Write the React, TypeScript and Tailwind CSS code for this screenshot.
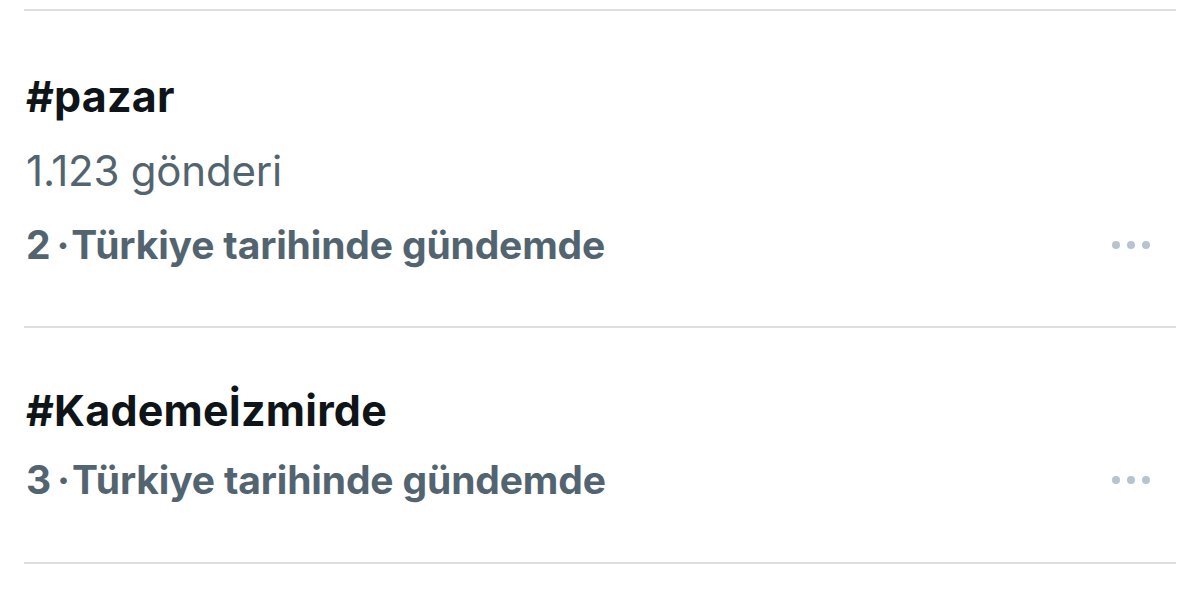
interface Trend {
  tag: string;
  posts?: string;
  rank: number;
}

const trends: Trend[] = [
  { tag: '#pazar', posts: '1.123 gönderi', rank: 2 },
  { tag: '#Kademeİzmirde', rank: 3 },
];

function MoreDots() {
  return (
    <div className="flex items-center gap-[7px] pr-[26px]">
      <span className="w-[8px] h-[8px] rounded-full bg-[#b7c4cf]" />
      <span className="w-[8px] h-[8px] rounded-full bg-[#b7c4cf]" />
      <span className="w-[8px] h-[8px] rounded-full bg-[#b7c4cf]" />
    </div>
  );
}

function TrendItem({ trend }: { trend: Trend }) {
  // first item has the post count row, so spacing differs a bit
  const withPosts = !!trend.posts;
  return (
    <div className={`border-b-2 border-[#dcdfe2] pl-[2px] ${withPosts ? 'pt-[48px] pb-[44px]' : 'pt-[47px] pb-[47px]'}`}>
      <div
        className={`${withPosts ? 'h-[74px]' : 'h-[70px]'} flex items-center text-[43px] font-bold text-[#0f1419] tracking-[0.2px]`}
      >
        {trend.tag}
      </div>
      {trend.posts && (
        <div className="h-[75px] flex items-center text-[42px] text-[#536471] tracking-[-0.2px]">{trend.posts}</div>
      )}
      <div className={`${withPosts ? 'h-[74px]' : 'h-[70px]'} flex items-center justify-between`}>
        <span className="text-[39px] font-bold text-[#536471] tracking-[-0.15px]">
          {trend.rank}
          <span className="ml-[6px] mr-[2px]">·</span>
          Türkiye tarihinde gündemde
        </span>
        <MoreDots />
      </div>
    </div>
  );
}

export default function App() {
  return (
    <div
      className="w-[1200px] h-[605px] bg-white overflow-hidden pt-[9px]"
      style={{ fontFamily: 'Inter, "Noto Sans", sans-serif' }}
    >
      <div className="mx-[24px] border-t-2 border-[#dcdfe2]">
        {trends.map((t) => (
          <TrendItem key={t.tag} trend={t} />
        ))}
      </div>
    </div>
  );
}
